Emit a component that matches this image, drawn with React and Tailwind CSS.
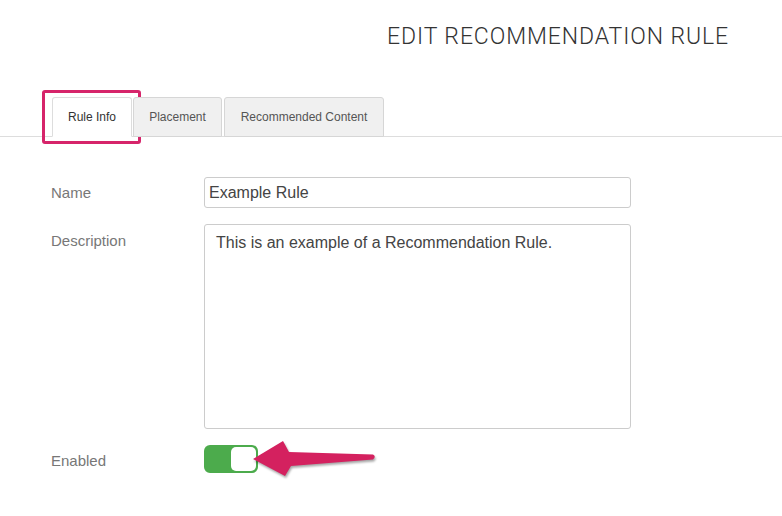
export default function App() {
  const tabs = [
    { label: "Rule Info", w: "w-[80px]" },
    { label: "Placement", w: "w-[89px]" },
    { label: "Recommended Content", w: "w-[160px] ml-px" },
  ];

  return (
    <div className="w-[782px] h-[516px] bg-white overflow-hidden font-['Liberation_Sans',Arial,sans-serif]">
      {/* Header */}
      <div className="h-[97px] flex justify-end pr-[53px] pt-[25px]">
        <h1 className="font-['Roboto',sans-serif] font-light text-[23px] leading-none text-[#333] tracking-[0.9px]">
          EDIT RECOMMENDATION RULE
        </h1>
      </div>

      {/* Tabs */}
      <div className="flex items-end gap-[1px] h-[40px] pl-[52px] border-b border-[#dddddd]">
        {tabs.map((t, i) => (
          <div
            key={t.label}
            className={
              i === 0
                ? `relative ${t.w} h-[40px] -mb-px flex items-center justify-center text-[12px] text-[#333] bg-white border border-[#dddddd] border-b-white rounded-t-[3px]`
                : `relative ${t.w} h-[40px] -mb-px flex items-center justify-center text-[12px] text-[#555] bg-[#f0f0f0] border border-[#d6d6d6] rounded-t-[3px]`
            }
          >
            {t.label}
            {i === 0 && (
              <div className="absolute left-[-11px] top-[-8px] w-[99px] h-[54px] border-[3px] border-[#d6246a] rounded-[3px]" />
            )}
          </div>
        ))}
      </div>

      {/* Form */}
      <div className="pt-[40px] pl-[51px] flex flex-col gap-[16px]">
        <div className="flex items-center">
          <label className="w-[153px] text-[15px] text-[#777] pt-[1px]">Name</label>
          <input
            readOnly
            defaultValue="Example Rule"
            className="w-[427px] h-[31px] px-[4px] text-[16px] text-[#444] border border-[#cccccc] rounded-[3px] outline-none"
          />
        </div>

        <div className="flex items-start">
          <label className="w-[153px] pt-[6px] text-[15px] text-[#777]">Description</label>
          <textarea
            readOnly
            defaultValue="This is an example of a Recommendation Rule."
            className="w-[427px] h-[205px] pt-[8px] px-[11px] text-[16px] leading-[20px] text-[#444] border border-[#cccccc] rounded-[3px] outline-none resize-none"
          />
        </div>

        <div className="flex items-center">
          <label className="w-[153px] text-[15px] text-[#777] pt-[4px]">Enabled</label>
          <div className="relative">
            <div className="w-[54px] h-[28px] rounded-[6px] bg-[#4cab4c] flex items-center justify-end pr-[2px]">
              <div className="w-[25px] h-[24px] rounded-[5px] bg-white" />
            </div>
            {/* annotation arrow */}
            <svg
              className="absolute left-[48px] top-[-6px] drop-shadow-[1px_2px_1px_rgba(0,0,0,0.35)]"
              width="126"
              height="40"
              viewBox="0 0 126 40"
            >
              <path
                d="M1 20 L31 2 L37 13 L121 15.5 Q124.5 17.5 121 20.5 L39 27 L33 37 Z"
                fill="#d4215f"
              />
            </svg>
          </div>
        </div>
      </div>
    </div>
  );
}
